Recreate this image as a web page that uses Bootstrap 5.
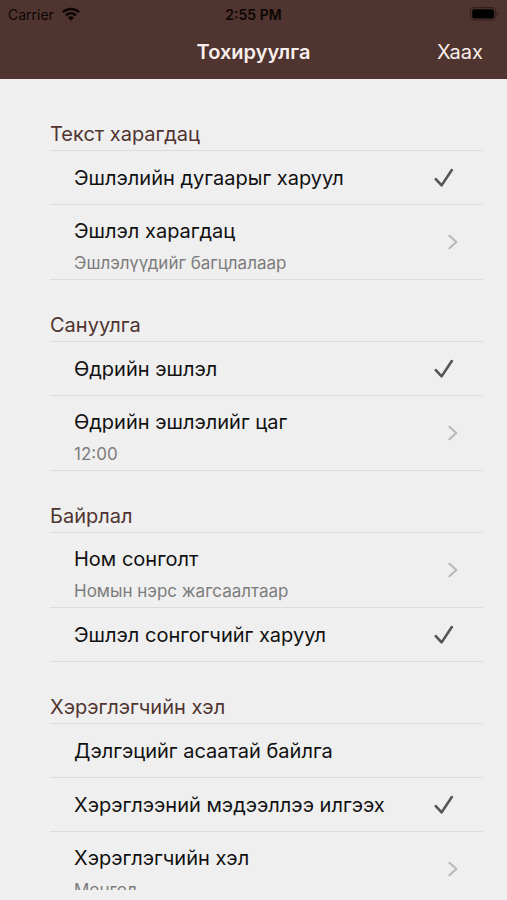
<!DOCTYPE html>
<html lang="mn">
<head>
<meta charset="utf-8">
<meta name="viewport" content="width=device-width, initial-scale=1">
<title>Тохируулга</title>
<link href="https://cdn.jsdelivr.net/npm/bootstrap@5.3.0/dist/css/bootstrap.min.css" rel="stylesheet">
<style>
  body { background: #efefef; font-family: Inter, "Liberation Sans", sans-serif; color: #111; }
  .app-header { background: #4f342f; }
  .status-bar { height: 28px; font-size: 14px; color: #0d0504; padding: 0 8px; }
  .status-time { font-weight: 600; }
  .title-bar { height: 51px; padding: 0 24px 3px; font-size: 20px; color: #f8efed; }
  .title-bar h1 { font-size: 20px; line-height: 24px; font-weight: 600; }
  .title-bar .btn { font-size: 20px; line-height: 24px; color: #f8efed; display: block; margin-left: auto; }
  .settings { margin-bottom: 10px; padding: 9px 24px 0 50px; scrollbar-width: none; }
  .settings::-webkit-scrollbar { display: none; }
  .section-title { height: 62px; padding-bottom: 4px; font-size: 20px; line-height: 24px; color: #4f342f; }
  .setting { min-height: 54px; padding: 0 24px; border-top: 1px solid #dcdcdc; font-size: 20px; line-height: 24px; color: #111; }
  .settings section .setting:last-child { box-shadow: 0 1px #dcdcdc; }
  .setting-tall { min-height: 75px; }
  .setting-tall span { padding-top: 8px; }
  .setting small { font-size: 17px; line-height: 20px; margin-top: 10px; color: #7c7c7c; }
  .tick { appearance: none; width: 20px; height: 20px; margin: 0 5px 0 0; }
  .tick:checked { background: center / 20px 20px no-repeat url("data:image/svg+xml,%3Csvg xmlns='http://www.w3.org/2000/svg' viewBox='0 0 20 20'%3E%3Cpath d='M1.8 11.2 7.6 17.4 17.8 2' fill='none' stroke='%23555' stroke-width='2.6' stroke-linecap='round' stroke-linejoin='round'/%3E%3C/svg%3E"); }
  .chevron { width: 10px; height: 16px; margin-right: 1px; }
</style>
<script src="https://cdn.jsdelivr.net/npm/bootstrap@5.3.0/dist/js/bootstrap.bundle.min.js"></script>
</head>
<body class="vh-100 d-flex flex-column overflow-hidden">
<svg class="d-none" aria-hidden="true">
  <symbol id="chevron" viewBox="0 0 10 16"><path d="M1.5 1.8 8.3 8l-6.8 6.2" fill="none" stroke="#b9b9b9" stroke-width="2.2" stroke-linecap="round" stroke-linejoin="round"/></symbol>
</svg>

<header class="app-header flex-shrink-0">
  <div class="status-bar row g-0 align-items-center">
    <div class="col d-flex align-items-center gap-2">
      <span>Carrier</span>
      <svg width="18" height="14" viewBox="0 0 18 14" aria-hidden="true">
        <g fill="none" stroke="#0d0504" stroke-width="2.5"><path d="M.9 5.2a11.6 11.6 0 0 1 16.2 0"/><path d="M3.9 8.4a7.3 7.3 0 0 1 10.2 0"/></g>
        <path d="M9 13.8 5.9 10.6a4.5 4.5 0 0 1 6.2 0z" fill="#0d0504"/>
      </svg>
    </div>
    <div class="col-auto status-time">2:55 PM</div>
    <div class="col d-flex justify-content-end">
      <svg width="29" height="14" viewBox="0 0 29 14" aria-hidden="true">
        <rect x=".6" y=".6" width="25" height="12.4" rx="3.6" fill="none" stroke="#33201d" stroke-width="1.1"/>
        <rect x="2.2" y="2.2" width="21.8" height="9.2" rx="2" fill="#000"/>
        <path d="M27 4.6c1.9.8 1.9 3.6 0 4.4z" fill="#33201d"/>
      </svg>
    </div>
  </div>
  <div class="title-bar row g-0 align-items-center">
    <div class="col"></div>
    <h1 class="col-auto m-0">Тохируулга</h1>
    <div class="col"><button type="button" class="btn p-0 border-0">Хаах</button></div>
  </div>
</header>

<main class="settings flex-fill overflow-auto">
  <section>
    <h2 class="section-title d-flex align-items-end m-0 fw-normal">Текст харагдац</h2>
    <label class="setting d-flex align-items-center justify-content-between">Эшлэлийн дугаарыг харуул<input class="tick" type="checkbox" checked></label>
    <button type="button" class="setting setting-tall btn rounded-0 border-start-0 border-end-0 border-bottom-0 w-100 d-flex align-items-center justify-content-between text-start">
      <span class="d-flex flex-column">Эшлэл харагдац<small>Эшлэлүүдийг багцлалаар</small></span>
      <svg class="chevron" aria-hidden="true"><use href="#chevron"/></svg>
    </button>
  </section>
  <section>
    <h2 class="section-title d-flex align-items-end m-0 fw-normal">Сануулга</h2>
    <label class="setting d-flex align-items-center justify-content-between">Өдрийн эшлэл<input class="tick" type="checkbox" checked></label>
    <button type="button" class="setting setting-tall btn rounded-0 border-start-0 border-end-0 border-bottom-0 w-100 d-flex align-items-center justify-content-between text-start">
      <span class="d-flex flex-column">Өдрийн эшлэлийг цаг<small>12:00</small></span>
      <svg class="chevron" aria-hidden="true"><use href="#chevron"/></svg>
    </button>
  </section>
  <section>
    <h2 class="section-title d-flex align-items-end m-0 fw-normal">Байрлал</h2>
    <button type="button" class="setting setting-tall btn rounded-0 border-start-0 border-end-0 border-bottom-0 w-100 d-flex align-items-center justify-content-between text-start">
      <span class="d-flex flex-column">Ном сонголт<small>Номын нэрс жагсаалтаар</small></span>
      <svg class="chevron" aria-hidden="true"><use href="#chevron"/></svg>
    </button>
    <label class="setting d-flex align-items-center justify-content-between">Эшлэл сонгогчийг харуул<input class="tick" type="checkbox" checked></label>
  </section>
  <section>
    <h2 class="section-title d-flex align-items-end m-0 fw-normal">Хэрэглэгчийн хэл</h2>
    <label class="setting d-flex align-items-center justify-content-between">Дэлгэцийг асаатай байлга<input class="tick" type="checkbox"></label>
    <label class="setting d-flex align-items-center justify-content-between">Хэрэглээний мэдээллээ илгээх<input class="tick" type="checkbox" checked></label>
    <button type="button" class="setting setting-tall btn rounded-0 border-start-0 border-end-0 border-bottom-0 w-100 d-flex align-items-center justify-content-between text-start">
      <span class="d-flex flex-column">Хэрэглэгчийн хэл<small>Монгол</small></span>
      <svg class="chevron" aria-hidden="true"><use href="#chevron"/></svg>
    </button>
  </section>
</main>
</body>
</html>
